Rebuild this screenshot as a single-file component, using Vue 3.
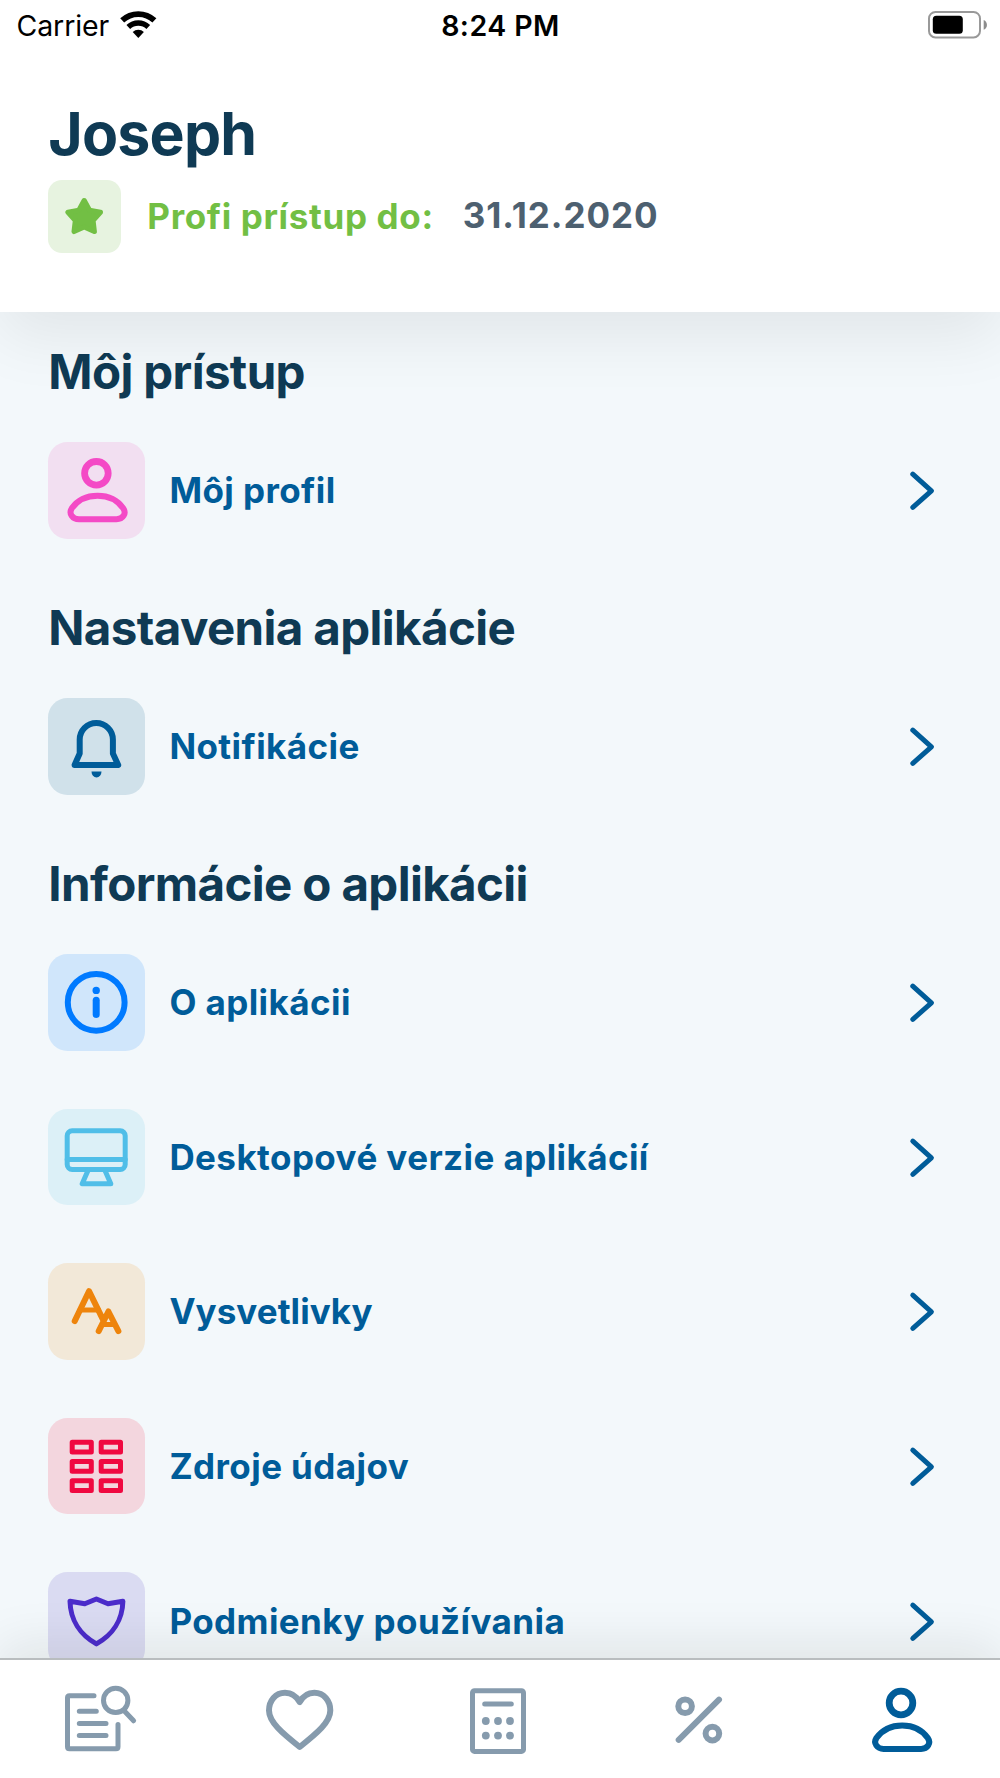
<template>
  <div class="screen">
    <!-- Status bar -->
    <div class="status-bar">
      <div class="status-left">
        <span class="carrier">Carrier</span>
        <svg class="wifi" viewBox="0 0 37 28" fill="none" stroke="#000">
          <path d="M2.2 9.4A23.6 23.6 0 0 1 34.4 9.4" stroke-width="5.8" />
          <path d="M8.3 16A14.6 14.6 0 0 1 28.3 16" stroke-width="5.4" />
          <path d="M18.3 26.9L12.7 20.9A8.2 8.2 0 0 1 23.9 20.9Z" fill="#000" stroke="none" />
        </svg>
      </div>
      <span class="time">8:24 PM</span>
      <div class="status-right">
        <svg class="battery" viewBox="0 0 60 28">
          <rect x="1" y="1" width="51" height="25.4" rx="6.5" fill="none" stroke="#999" stroke-width="2" />
          <rect x="4.8" y="4.8" width="30" height="18" rx="3.5" fill="#000" />
          <path d="M55.7 9C60 10.8 60 17 55.7 18.8Z" fill="#8c8c8c" />
        </svg>
      </div>
    </div>

    <!-- Header -->
    <header class="header">
      <h1 class="name">Joseph</h1>
      <div class="access">
        <div class="badge">
          <svg viewBox="0 0 72.5 72.5">
            <path
              d="M36.2 20.6L41.5 30.2L52.4 32.3L45 40.6L46.3 51.5L36.2 47L26.1 51.5L27.4 40.6L20 32.3L30.9 30.2Z"
              fill="#72bf44"
              stroke="#72bf44"
              stroke-width="5.2"
              stroke-linejoin="round"
            />
          </svg>
        </div>
        <span class="access-label">Profi prístup do:</span>
        <span class="access-date">31.12.2020</span>
      </div>
    </header>

    <!-- Settings list -->
    <main class="content">
      <section v-for="section in sections" :key="section.title" class="section">
        <h2 class="section-title">{{ section.title }}</h2>
        <div class="rows">
          <a v-for="item in section.items" :key="item.icon" class="row">
            <span :class="['tile', item.icon]">
              <svg viewBox="0 0 96.6 96.6">
                <g v-if="item.icon === 'profile'">
                  <circle cx="48.4" cy="31.3" r="11.8" stroke-width="6.8" />
                  <path :d="bodyPath" />
                </g>
                <g v-else-if="item.icon === 'bell'">
                  <path d="M31.7 41.5a16.6 16.6 0 0 1 33.2 0V55.5L70.2 67H26.6L31.7 55.5Z" />
                  <path class="solid" d="M43.5 73.6H53.5A5 6 0 0 1 43.5 73.6Z" />
                </g>
                <g v-else-if="item.icon === 'info'">
                  <circle cx="48.2" cy="48.3" r="28.4" />
                  <circle class="solid" cx="48.2" cy="36.4" r="3.7" />
                  <path d="M48.2 46.2V60.4" stroke-width="7" />
                </g>
                <g v-else-if="item.icon === 'desktop'" stroke-width="5">
                  <rect x="19.2" y="21.7" width="58" height="38.7" rx="5" />
                  <path d="M19.2 50.6H77.2M40 61.5L34.2 74.7H62.8L57 61.5" />
                </g>
                <g v-else-if="item.icon === 'terms'">
                  <path d="M26.7 58.1L41 28.2L55 56.6M50.7 68.1L60.4 48.5L70.4 68.1" />
                  <path d="M32 47.1H50.6M54.5 61.5H66" stroke-width="5" />
                </g>
                <g v-else-if="item.icon === 'sources'" stroke-width="5">
                  <template v-for="y in [24.2, 43.6, 62.8]" :key="y">
                    <rect x="24.2" :y="y" width="19.1" height="9.7" />
                    <rect x="53.2" :y="y" width="19.3" height="9.7" />
                  </template>
                </g>
                <g v-else-if="item.icon === 'shield'" stroke-width="5">
                  <path d="M22 29.3L36.8 31.8L48.4 27L60 31.8L74.9 29.3C74.5 48 64.5 63 48.4 71.9C32.3 63 22.4 48 22 29.3Z" />
                </g>
              </svg>
            </span>
            <span :class="['label', { tight: item.icon === 'terms' }]">{{ item.label }}</span>
            <svg class="chevron" viewBox="0 0 24 38">
              <path d="M2.8 3.2L21.4 19.8L2.8 36.3" />
            </svg>
          </a>
        </div>
      </section>
    </main>

    <!-- Bottom tabs -->
    <nav class="tab-bar">
      <a class="tab">
        <svg viewBox="0 0 80 80" stroke-width="5">
          <path d="M34 15.7H9.5Q7.5 15.7 7.5 17.7V66.7Q7.5 68.7 9.5 68.7H56Q58 68.7 58 66.7V44.5" />
          <path d="M19.3 31.3H36.3M19.3 43.4H46M19.3 55.6H46" />
          <circle cx="55.7" cy="20.4" r="12.2" />
          <path d="M64.6 31.2L73.6 40.8" />
        </svg>
      </a>
      <a class="tab">
        <svg viewBox="0 0 80 80" stroke-width="6">
          <path d="M39.7 22.2C36.4 16 31 12.8 25 12.8C15.5 12.8 9 20.8 9 30.6C9 42 22 53 39.7 67C57.4 53 70.3 42 70.3 30.6C70.3 20.8 63.8 12.8 54.4 12.8C48.4 12.8 43 16 39.7 22.2Z" />
        </svg>
      </a>
      <a class="tab">
        <svg viewBox="0 0 80 80" stroke-width="5">
          <rect x="12.5" y="10.8" width="51" height="60.6" rx="2" />
          <path d="M24.7 24H51.3" />
          <template v-for="y in [41, 55.6]" :key="y">
            <circle v-for="x in [25.8, 38, 50]" :key="x" class="solid" :cx="x" :cy="y" r="3.9" />
          </template>
        </svg>
      </a>
      <a class="tab">
        <svg viewBox="0 0 80 80" stroke-width="6">
          <circle cx="25.1" cy="26.2" r="6.8" />
          <circle cx="52.4" cy="53.6" r="6.8" />
          <path d="M59 19.7L18.7 59.9" />
        </svg>
      </a>
      <a class="tab active">
        <svg viewBox="7.4 8.3 80 80" stroke-width="6">
          <circle cx="48.4" cy="31.3" r="11.8" stroke-width="6.8" />
          <path :d="bodyPath" />
        </svg>
      </a>
    </nav>
  </div>
</template>

<script setup>
// Shoulders of the person icon, shared by the profile row and the profile tab
const bodyPath =
  'M31 77.2H68.5C75 77.2 78.8 71.5 75.2 66.3C69.5 58 60 53.7 49.6 53.7S29.6 58 23.8 66.3C20.4 71.5 24.5 77.2 31 77.2Z'

const sections = [
  {
    title: 'Môj prístup',
    items: [{ icon: 'profile', label: 'Môj profil' }]
  },
  {
    title: 'Nastavenia aplikácie',
    items: [{ icon: 'bell', label: 'Notifikácie' }]
  },
  {
    title: 'Informácie o aplikácii',
    items: [
      { icon: 'info', label: 'O aplikácii' },
      { icon: 'desktop', label: 'Desktopové verzie aplikácií' },
      { icon: 'terms', label: 'Vysvetlivky' },
      { icon: 'sources', label: 'Zdroje údajov' },
      { icon: 'shield', label: 'Podmienky používania' }
    ]
  }
]
</script>

<style>
body {
  margin: 0;
}
</style>

<style scoped>
.screen {
  display: flex;
  flex-direction: column;
  height: 1778px;
  overflow: hidden;
  background: #f3f8fb;
  font-family: Inter, "Liberation Sans", sans-serif;
}

/* Status bar */
.status-bar {
  display: grid;
  grid-template-columns: 1fr auto 1fr;
  align-items: center;
  flex: none;
  height: 50px;
  padding: 0 13.5px 0 16.5px;
  background: #fff;
  position: relative;
  z-index: 3;
  font-size: 28.5px;
  color: #000;
}
.status-left {
  display: flex;
  align-items: center;
  gap: 11px;
}
.carrier {
  font-weight: 400;
  letter-spacing: -0.1px;
}
.wifi {
  width: 37px;
  height: 28px;
}
.time {
  margin-right: 2px;
  font-weight: 600;
  letter-spacing: 0.45px;
}
.status-right {
  display: flex;
  justify-content: flex-end;
}
.battery {
  width: 60px;
  height: 28px;
  margin-right: -1px;
}

/* Header */
.header {
  flex: none;
  box-sizing: border-box;
  height: 262px;
  padding: 53.5px 48.3px 0;
  background: #fff;
  position: relative;
  z-index: 2;
  box-shadow: 0 24px 60px rgba(20, 20, 0, 0.075);
}
.name {
  margin: 0 0 16.5px;
  font-size: 59px;
  line-height: 60px;
  font-weight: 700;
  letter-spacing: -0.8px;
  color: #0f3a54;
}
.access {
  display: flex;
  align-items: center;
  font-size: 35px;
  font-weight: 700;
}
.badge {
  width: 72.5px;
  height: 72.5px;
  border-radius: 14px;
  background: #e7f3e0;
}
.badge svg {
  display: block;
}
.access-label {
  margin-left: 26.5px;
  letter-spacing: 0.65px;
  color: #72bf44;
}
.access-date {
  margin-left: 29px;
  padding-bottom: 2px;
  letter-spacing: 0.95px;
  color: #4d6070;
}

/* List */
.content {
  flex: 1;
  min-height: 0;
  overflow: hidden;
  padding: 30px 66px 0 48.3px;
}
.section {
  margin-bottom: 59.4px;
}
.section-title {
  margin: 0 0 40px;
  font-size: 47.5px;
  line-height: 60px;
  font-weight: 700;
  letter-spacing: -0.63px;
  color: #0f3a54;
  white-space: nowrap;
}
.rows {
  display: flex;
  flex-direction: column;
  gap: 58px;
}
.row {
  display: flex;
  align-items: center;
  height: 96.6px;
}
.tile {
  flex: none;
  width: 96.6px;
  height: 96.6px;
  border-radius: 19.5px;
}
.tile svg {
  display: block;
  fill: none;
  stroke: currentColor;
  stroke-width: 6px;
  stroke-linecap: round;
  stroke-linejoin: round;
}
.tile svg .solid,
.tab svg .solid {
  fill: currentColor;
  stroke: none;
}
.profile {
  color: #f44ac6;
  background: #f2dff1;
}
.bell {
  color: #005c99;
  background: #d0e1ea;
}
.info {
  color: #007aff;
  background: #d0e6fb;
}
.desktop {
  color: #50bee8;
  background: #dcf0f7;
}
.terms {
  color: #ee840c;
  background: #f2e8d8;
}
.sources {
  color: #f00840;
  background: #f3d6de;
}
.shield {
  color: #4b2cca;
  background: #dadbf2;
}
.label {
  flex: 1;
  margin-left: 24.5px;
  font-size: 35px;
  font-weight: 700;
  letter-spacing: 0.42px;
  color: #005c99;
  white-space: nowrap;
}
.label.tight {
  letter-spacing: 0.05px;
}
.chevron {
  flex: none;
  width: 24px;
  height: 38px;
  overflow: visible;
  fill: none;
  stroke: #005c99;
  stroke-width: 5px;
  stroke-linecap: round;
  stroke-linejoin: round;
}

/* Tab bar */
.tab-bar {
  flex: none;
  box-sizing: border-box;
  display: grid;
  grid-template-columns: repeat(5, 1fr);
  height: 120px;
  padding-top: 19.5px;
  border-top: 2px solid #b9bdbf;
  background: #fff;
  position: relative;
  z-index: 2;
  box-shadow: 0 -14px 50px rgba(20, 20, 0, 0.085);
}
.tab {
  display: flex;
  justify-content: center;
  color: #869bad;
}
.tab.active {
  color: #005c99;
}
.tab svg {
  width: 80px;
  height: 80px;
  fill: none;
  stroke: currentColor;
  stroke-linecap: round;
  stroke-linejoin: round;
}
</style>
